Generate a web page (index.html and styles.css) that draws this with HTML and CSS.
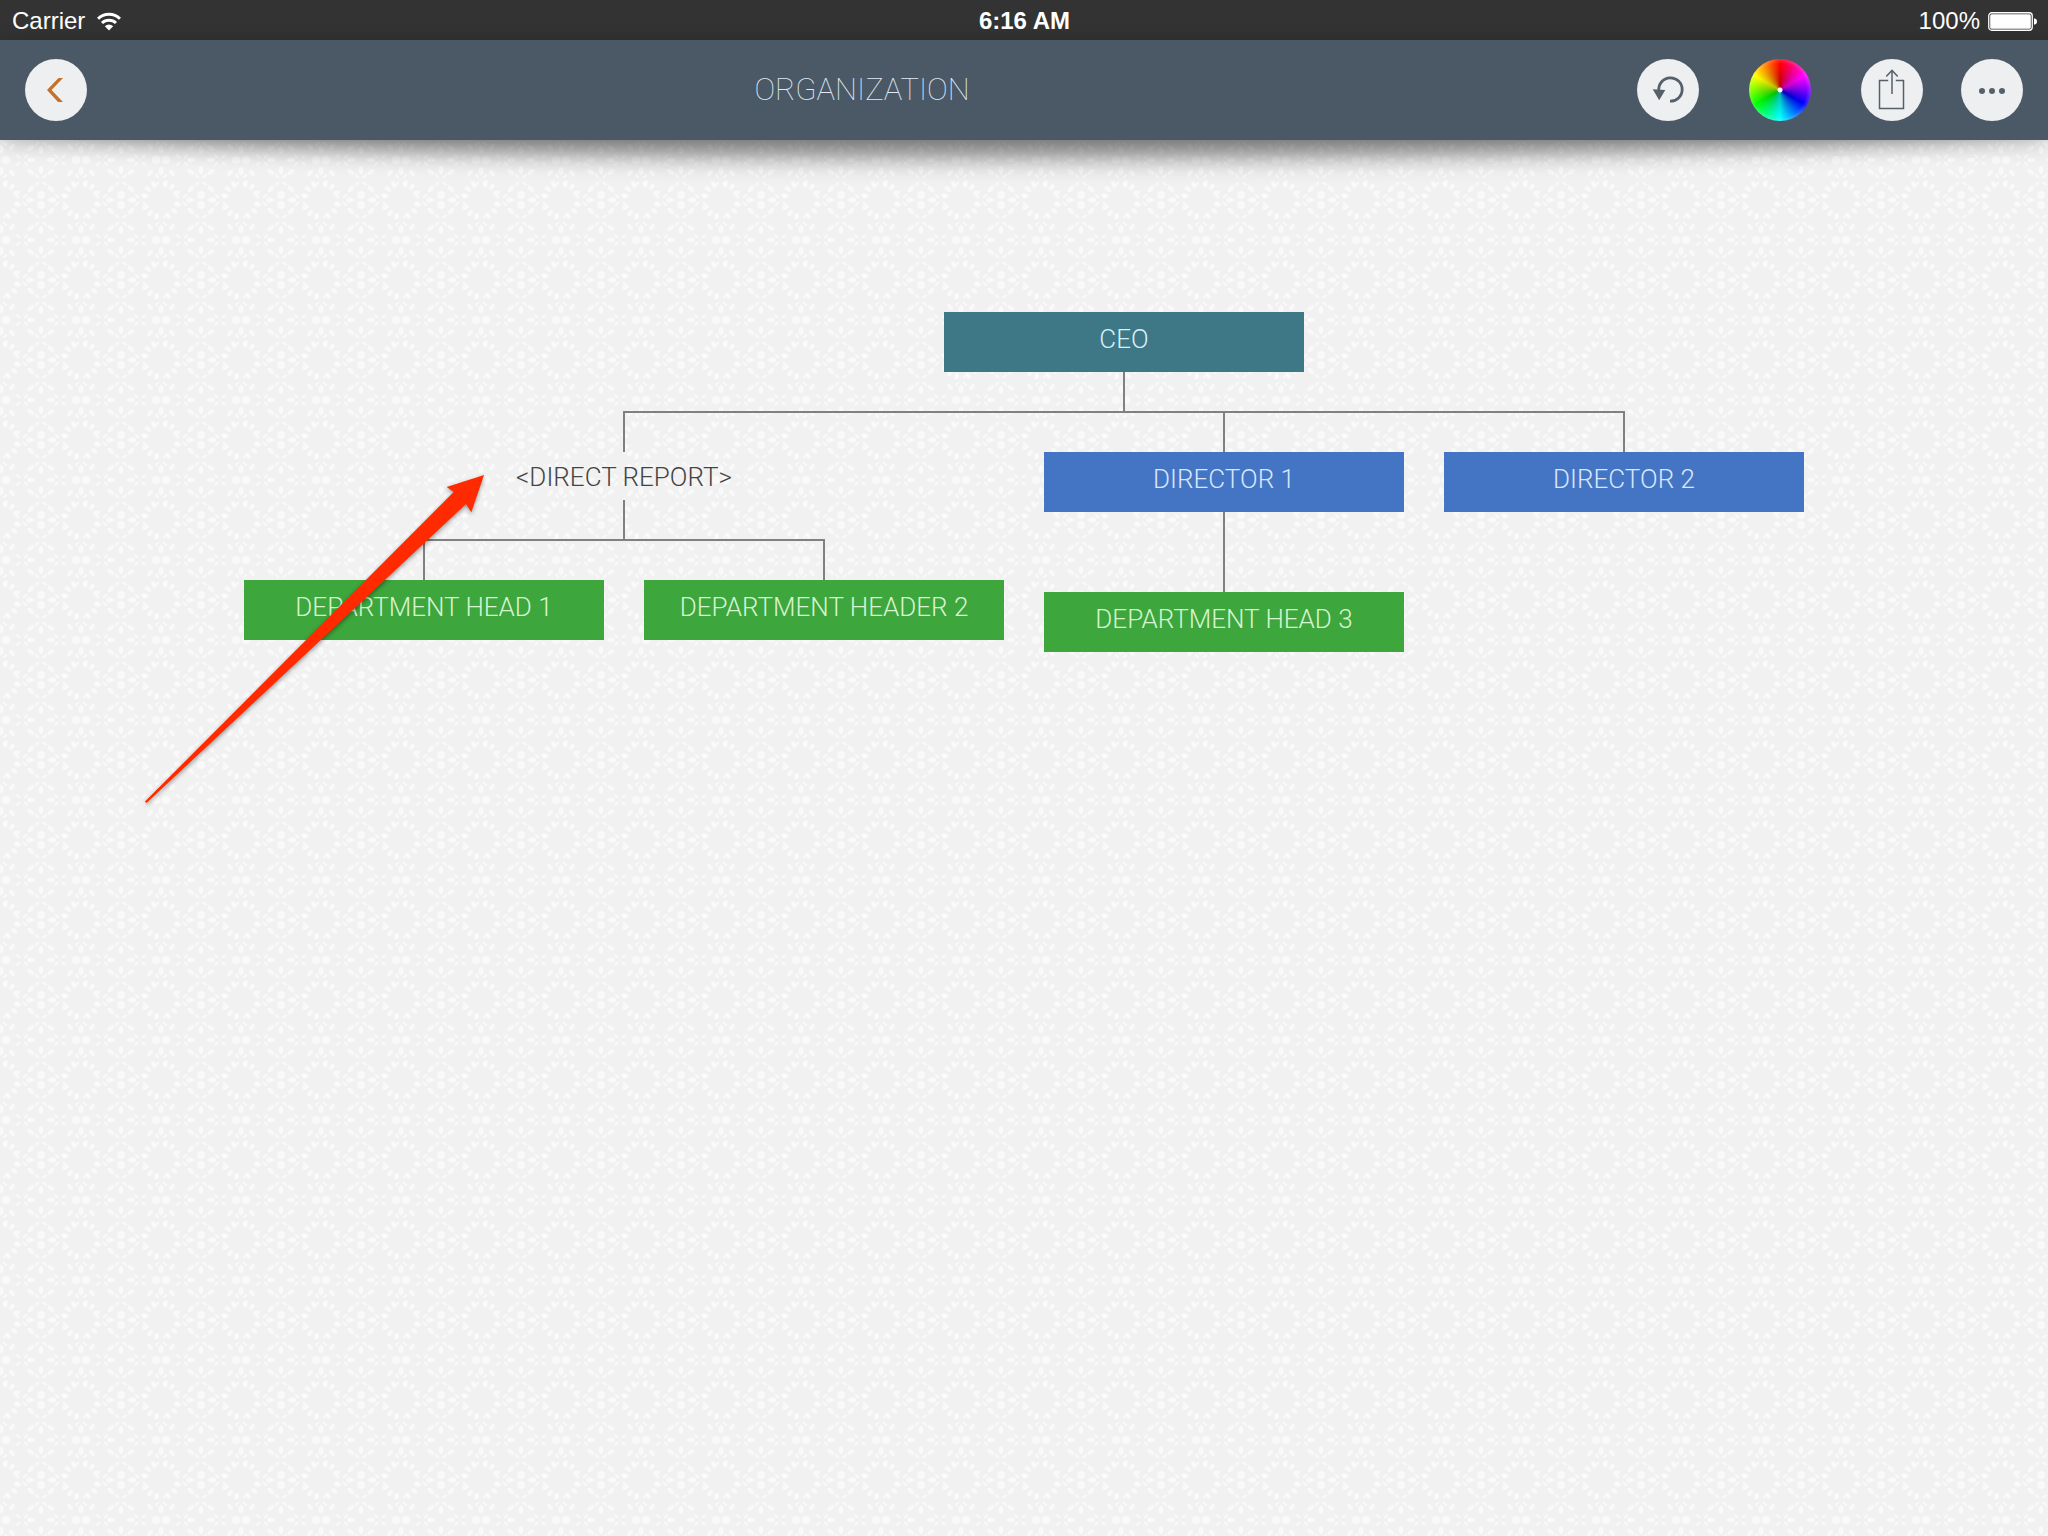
FILE: index.html
```html
<!DOCTYPE html>
<html lang="en">
<head>
<meta charset="utf-8">
<meta name="viewport" content="width=device-width, initial-scale=1">
<title>Organization</title>
<link rel="stylesheet" href="styles.css">
</head>
<body>
<div class="status">
  <div class="status-side">
    <span>Carrier</span>
    <svg class="wifi" viewBox="0 0 24 19" aria-hidden="true">
      <g fill="none" stroke="#fff" stroke-width="3">
        <path d="M1 6.800A15.500 15.500 0 0 1 23 6.800"/>
        <path d="M5 11A10 10 0 0 1 19 11"/>
      </g>
      <path fill="#fff" d="M12 18.500L7.800 14.200A6 6 0 0 1 16.200 14.200Z"/>
    </svg>
  </div>
  <time class="clock">6:16 AM</time>
  <div class="status-side status-right">
    <span>100%</span>
    <svg class="battery" viewBox="0 0 49 19" aria-hidden="true">
      <rect x=".75" y=".75" width="43.500" height="17.500" rx="3" fill="none" stroke="#fff" stroke-width="1.300"/>
      <rect x="2.200" y="2.200" width="40.600" height="14.600" rx="1.500" fill="#fff"/>
      <path fill="#fff" d="M46 6.200Q49 6.800 49 9.500T46 12.800Z"/>
    </svg>
  </div>
</div>

<header class="toolbar">
  <button class="round" type="button" aria-label="Back">
    <svg viewBox="0 0 62 62"><path fill="#c6702a" d="M38 19H33.500L22 31L33 43H38L26.500 31Z"/></svg>
  </button>
  <h1 class="title">ORGANIZATION</h1>
  <div class="actions">
    <button class="round" type="button" aria-label="Undo">
      <svg viewBox="0 0 62 62">
        <path fill="none" stroke="#56606b" stroke-width="2.800" d="M33 42.200A11.700 11.700 0 1 0 21.800 31.500"/>
        <path fill="#56606b" d="M15.700 30.300L28.300 31L22.200 41.300Z"/>
      </svg>
    </button>
    <button class="round wheel" type="button" aria-label="Colors"></button>
    <div class="pair">
      <button class="round" type="button" aria-label="Share">
        <svg viewBox="0 0 62 62">
          <path fill="none" stroke="#56606b" stroke-width="1.500" d="M27.200 21.500H18.500V49.500H42.500V21.500H34.800M31 11.500V35M25.300 17.500L31 11.300L36.700 17.500"/>
        </svg>
      </button>
      <button class="round" type="button" aria-label="More">
        <svg viewBox="0 0 62 62">
          <g fill="#56606b"><circle cx="21" cy="32" r="3"/><circle cx="31" cy="32" r="3"/><circle cx="41" cy="32" r="3"/></g>
        </svg>
      </button>
    </div>
  </div>
</header>

<main class="canvas">
  <div class="chart">
    <div class="root">
      <div class="node teal">CEO</div>
      <div class="stem"></div>
      <div class="bar"></div>
    </div>
    <div class="level">
      <div class="branch">
        <div class="stem"></div>
        <div class="node empty">&lt;DIRECT REPORT&gt;</div>
        <div class="stem"></div>
        <div class="bar bar-inner"></div>
        <div class="level">
          <div class="branch">
            <div class="stem"></div>
            <div class="node green">DEPARTMENT HEAD 1</div>
          </div>
          <div class="branch">
            <div class="stem"></div>
            <div class="node green">DEPARTMENT HEADER 2</div>
          </div>
        </div>
      </div>
      <div class="branch">
        <div class="stem"></div>
        <div class="node blue">DIRECTOR 1</div>
        <div class="stem stem-long"></div>
        <div class="node green">DEPARTMENT HEAD 3</div>
      </div>
      <div class="branch">
        <div class="stem"></div>
        <div class="node blue">DIRECTOR 2</div>
      </div>
    </div>
    <svg class="pointer" viewBox="0 0 342 332" aria-hidden="true">
      <path fill="#ff2a00" d="M340 1L302.700 13L309.700 18L1 327.500L2.500 329L322 30L327.300 38.300Z"/>
    </svg>
  </div>
</main>
</body>
</html>
```
FILE: styles.css
```css
* {
  box-sizing: border-box;
}

body {
  margin: 0;
  min-height: 100vh;
  display: flex;
  flex-direction: column;
  font-family: "Liberation Sans", Arial, sans-serif;
  background-color: #f1f1f1;
  /* 80px floral tile: rings of petals, small stars and paired dots */
  background-image: url("data:image/svg+xml,%3Csvg xmlns='http://www.w3.org/2000/svg' width='80' height='80'%3E%3Cdefs%3E%3Cellipse id='p' cy='-17' rx='2.200' ry='3.600'/%3E%3Cellipse id='s' cy='-5.500' rx='1.200' ry='2.800'/%3E%3Cg id='q'%3E%3Cuse href='%23p' transform='rotate(15)'/%3E%3Cuse href='%23p' transform='rotate(40)'/%3E%3Cuse href='%23p' transform='rotate(65)'/%3E%3C/g%3E%3Cg id='r'%3E%3Cuse href='%23q'/%3E%3Cuse href='%23q' transform='rotate(90)'/%3E%3Cuse href='%23q' transform='rotate(180)'/%3E%3Cuse href='%23q' transform='rotate(270)'/%3E%3C/g%3E%3Cg id='x'%3E%3Cuse href='%23s' transform='rotate(45)'/%3E%3Cuse href='%23s' transform='rotate(135)'/%3E%3Cuse href='%23s' transform='rotate(225)'/%3E%3Cuse href='%23s' transform='rotate(315)'/%3E%3C/g%3E%3Cg id='d'%3E%3Ccircle cy='-5' r='4.300'/%3E%3Ccircle cy='5' r='4.300'/%3E%3Cellipse cx='-11' rx='4' ry='2.600'/%3E%3Cellipse cx='11' rx='4' ry='2.600'/%3E%3C/g%3E%3Cg id='l'%3E%3Cellipse cy='-10' rx='2.400' ry='4'/%3E%3Cellipse cy='10' rx='2.400' ry='4'/%3E%3Cellipse cx='-10' rx='4' ry='2.400'/%3E%3Cellipse cx='10' rx='4' ry='2.400'/%3E%3C/g%3E%3Cg id='h'%3E%3Cuse href='%23d' transform='rotate(90)'/%3E%3Cuse href='%23p' transform='rotate(40)'/%3E%3Cuse href='%23p' transform='rotate(140)'/%3E%3Cuse href='%23p' transform='rotate(220)'/%3E%3Cuse href='%23p' transform='rotate(320)'/%3E%3C/g%3E%3C/defs%3E%3Cg fill='%23fff' fill-opacity='.55'%3E%3Cuse href='%23r' x='1' y='40'/%3E%3Cuse href='%23r' x='81' y='40'/%3E%3Cuse href='%23d' x='41' y='40'/%3E%3Cuse href='%23h' x='1'/%3E%3Cuse href='%23h' x='81'/%3E%3Cuse href='%23h' x='1' y='80'/%3E%3Cuse href='%23h' x='81' y='80'/%3E%3Cuse href='%23l' x='41'/%3E%3Cuse href='%23l' x='41' y='80'/%3E%3Cuse href='%23x' x='22'/%3E%3Cuse href='%23x' x='22' y='80'/%3E%3Cuse href='%23x' x='60'/%3E%3Cuse href='%23x' x='60' y='80'/%3E%3Cuse href='%23x' x='41' y='20'/%3E%3Cuse href='%23x' x='41' y='60'/%3E%3Cuse href='%23x' x='21' y='40'/%3E%3Cuse href='%23x' x='61' y='40'/%3E%3Cuse href='%23x' x='1' y='20'/%3E%3Cuse href='%23x' x='81' y='20'/%3E%3Cuse href='%23x' x='1' y='60'/%3E%3Cuse href='%23x' x='81' y='60'/%3E%3Cellipse rx='2.200' ry='4' transform='translate(31 29) rotate(45)'/%3E%3Cellipse rx='2.200' ry='4' transform='translate(51 29) rotate(-45)'/%3E%3Cellipse rx='2.200' ry='4' transform='translate(31 51) rotate(-45)'/%3E%3Cellipse rx='2.200' ry='4' transform='translate(51 51) rotate(45)'/%3E%3Cellipse rx='4' ry='2.200' transform='translate(31 12) rotate(35)'/%3E%3Cellipse rx='4' ry='2.200' transform='translate(51 12) rotate(-35)'/%3E%3Cellipse rx='4' ry='2.200' transform='translate(31 68) rotate(-35)'/%3E%3Cellipse rx='4' ry='2.200' transform='translate(51 68) rotate(35)'/%3E%3C/g%3E%3C/svg%3E");
}

.status {
  display: grid;
  grid-template-columns: 1fr auto 1fr;
  align-items: center;
  height: 40px;
  padding: 2px 11px 0 12px;
  background: #333;
  color: #fff;
  font-size: 24px;
  line-height: 38px;
}

.status-side {
  display: flex;
  align-items: center;
  gap: 12px;
}

.status-right {
  justify-content: flex-end;
  gap: 8px;
}

.wifi {
  width: 24px;
  height: 19px;
}

.battery {
  width: 49px;
  height: 19px;
}

.clock {
  font-size: 24px;
  font-weight: 700;
}

.toolbar {
  position: relative;
  z-index: 1;
  display: flex;
  align-items: center;
  height: 100px;
  padding: 0 25px;
  background: #4b5866;
}

/* curved drop shadow, deepest under the middle of the bar */
.toolbar::before {
  content: "";
  position: absolute;
  inset: 0;
  z-index: -2;
  border-radius: 0 0 50% 50% / 0 0 40px 40px;
  box-shadow: 0 18px 24px rgba(0, 0, 0, .42);
}

.toolbar::after {
  content: "";
  position: absolute;
  inset: 0;
  z-index: -1;
  background: #4b5866;
  box-shadow: 0 4px 20px rgba(0, 0, 0, .18);
}

.title {
  flex: 1;
  margin: 0;
  text-align: center;
  font-family: Roboto, "Liberation Sans", sans-serif;
  font-size: 31px;
  font-weight: 100;
  line-height: 40px;
  color: #dfeaf6;
}

.actions {
  display: flex;
  gap: 50px;
}

.pair {
  display: flex;
  gap: 38px;
}

.round {
  width: 62px;
  height: 62px;
  padding: 0;
  border: 0;
  border-radius: 50%;
  background: #edeff1;
}

.round svg {
  display: block;
}

.wheel {
  background:
    radial-gradient(circle, #fff 2px, transparent 3px),
    radial-gradient(circle, rgba(0, 0, 0, .3), transparent 60%, rgba(255, 255, 255, .2) 72%),
    conic-gradient(#f00, #f0f, #00f, #0ff, #0f0, #ff0, #f00);
}

.canvas {
  flex: 1;
  display: flex;
  justify-content: center;
  padding: 172px 20px 40px;
}

.chart {
  position: relative;
}

/* the parent sits midway between its first and last child */
.root {
  padding: 0 180px 0 380px;
}

.level {
  display: flex;
  align-items: flex-start;
  gap: 40px;
}

.node {
  width: 360px;
  height: 60px;
  margin: 0 auto;
  padding-top: 11px;
  text-align: center;
  font-family: Roboto, "Liberation Sans", sans-serif;
  font-size: 26px;
  font-weight: 300;
  line-height: 32px;
}

.teal {
  background: #3e7786;
  color: #d4f1fb;
}

.blue {
  background: #4475c5;
  color: #d8e6fa;
}

.green {
  background: #3da63d;
  color: #d6f5d0;
}

.empty {
  height: 48px;
  padding-top: 9px;
  color: #444;
}

.stem {
  width: 2px;
  height: 39px;
  margin: 0 auto;
  background: #808080;
}

.stem-long {
  height: 80px;
}

.bar {
  height: 2px;
  margin: 0 -1px;
  background: #808080;
}

.root .bar {
  margin: 0 -1px;
}

.bar-inner {
  margin: 0 179px;
}

.pointer {
  position: absolute;
  left: -100px;
  top: 162px;
  width: 342px;
  height: 332px;
  overflow: visible;
  filter: drop-shadow(0 2px 2px rgba(0, 0, 0, .4));
}
```
